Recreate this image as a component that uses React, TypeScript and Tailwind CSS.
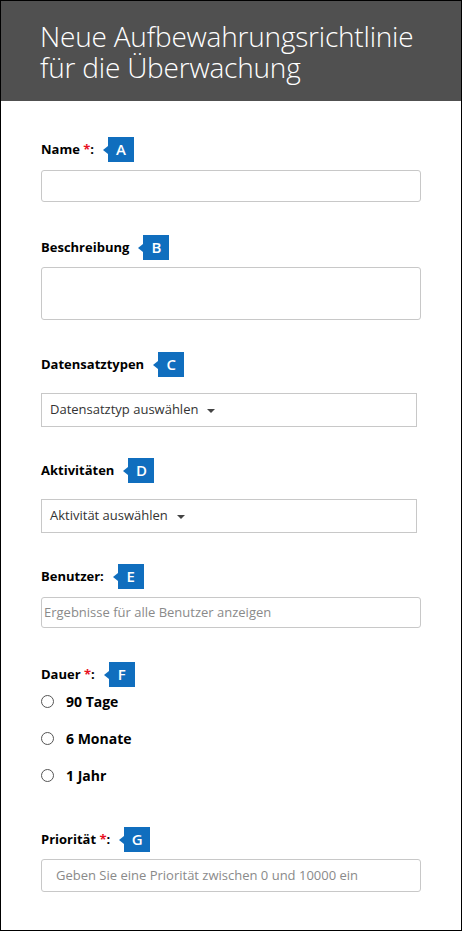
import React from 'react';

const font = { fontFamily: '"Segoe UI", "Open Sans", "Noto Sans", sans-serif' };

function Badge({ letter }: { letter: string }) {
  return (
    <div className="flex items-center ml-[9px]">
      <div className="w-0 h-0 border-y-[4px] border-y-transparent border-r-[5px] border-r-[#106ebe]" />
      <div className="w-[26px] h-[25px] bg-[#106ebe] text-white text-[15px] font-semibold flex items-center justify-center">
        {letter}
      </div>
    </div>
  );
}

function Label({ text, required, colon, letter }: { text: string; required?: boolean; colon?: boolean; letter: string }) {
  return (
    <div className="flex items-center h-[25px]">
      <span className="text-[13px] font-bold text-black">
        {text}
        {required && <span className="text-[#e81123]"> *</span>}
        {colon && ':'}
      </span>
      <Badge letter={letter} />
    </div>
  );
}

function Dropdown({ text }: { text: string }) {
  return (
    <div className="w-[376px] h-[34px] border border-[#c8c8c8] flex items-center pl-[8px] text-[13px] text-[#333]">
      {text}
      <svg width="8" height="4" viewBox="0 0 8 4" className="ml-[9px] mt-[1px]">
        <path d="M0 0 L8 0 L4 4 Z" fill="#444" />
      </svg>
    </div>
  );
}

function Radio({ text }: { text: string }) {
  return (
    <div className="flex items-center">
      <div className="w-[13px] h-[13px] rounded-full border border-[#555] bg-white" />
      <span className="ml-[12px] text-[14px] font-bold text-black">{text}</span>
    </div>
  );
}

export default function App() {
  return (
    <div className="w-[462px] h-[931px] border border-black bg-white overflow-hidden" style={font}>
      {/* Header */}
      <div className="h-[100px] bg-[#505050] pl-[39px] pt-[20px]">
        <h1 className="text-white text-[28px] leading-[31px] font-light tracking-[-0.2px]">
          <div>Neue Aufbewahrungsrichtlinie</div>
          <div>für die Überwachung</div>
        </h1>
      </div>

      <div className="px-[40px]">
        <div className="mt-[36px]">
          <Label text="Name" required colon letter="A" />
          <div className="mt-[8px] h-[32px] border border-[#c8c8c8] rounded-[3px]" />
        </div>

        <div className="mt-[33px]">
          <Label text="Beschreibung" letter="B" />
          <div className="mt-[7px] h-[53px] border border-[#c8c8c8] rounded-[3px]" />
        </div>

        <div className="mt-[32px]">
          <Label text="Datensatztypen" letter="C" />
          <div className="mt-[16px]">
            <Dropdown text="Datensatztyp auswählen" />
          </div>
        </div>

        <div className="mt-[31px]">
          <Label text="Aktivitäten" letter="D" />
          <div className="mt-[16px]">
            <Dropdown text="Aktivität auswählen" />
          </div>
        </div>

        <div className="mt-[31px]">
          <Label text="Benutzer" colon letter="E" />
          <div className="mt-[8px] h-[31px] border border-[#c8c8c8] rounded-[3px] flex items-center pl-[2px] text-[13px] text-[#8a8a8a]">
            Ergebnisse für alle Benutzer anzeigen
          </div>
        </div>

        <div className="mt-[34px]">
          <Label text="Dauer" required colon letter="F" />
          <div className="mt-[4px] flex flex-col gap-[16px]">
            <Radio text="90 Tage" />
            <Radio text="6 Monate" />
            <Radio text="1 Jahr" />
          </div>
        </div>

        <div className="mt-[41px]">
          <Label text="Priorität" required colon letter="G" />
          <div className="mt-[7px] h-[33px] border border-[#c8c8c8] rounded-[3px] flex items-center pl-[14px] text-[13px] text-[#8a8a8a]">
            Geben Sie eine Priorität zwischen 0 und 10000 ein
          </div>
        </div>
      </div>
    </div>
  );
}
